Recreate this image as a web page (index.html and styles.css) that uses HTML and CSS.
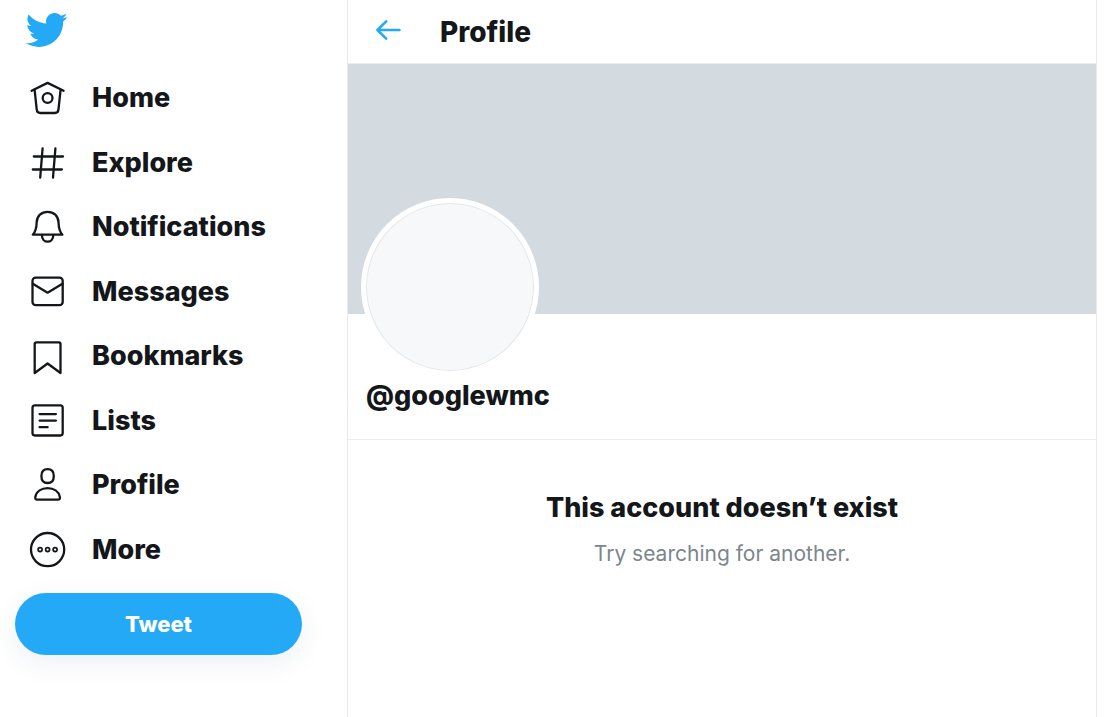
FILE: index.html
```html
<!DOCTYPE html>
<html lang="en">
<head>
<meta charset="utf-8">
<meta name="viewport" content="width=device-width, initial-scale=1">
<title>Profile / Twitter</title>
<link rel="stylesheet" href="styles.css">
</head>
<body>
<div class="layout">
  <header class="sidebar">
    <a class="logo" href="#" aria-label="Twitter">
      <svg viewBox="0 0 24 24" aria-hidden="true"><path d="M23.643 4.937c-.835.37-1.732.62-2.675.733.962-.576 1.7-1.49 2.048-2.578-.9.534-1.897.922-2.958 1.13-.85-.904-2.06-1.47-3.4-1.47-2.572 0-4.658 2.086-4.658 4.66 0 .364.042.718.12 1.06-3.873-.195-7.304-2.05-9.602-4.868-.4.69-.63 1.49-.63 2.342 0 1.616.823 3.043 2.072 3.878-.764-.025-1.482-.234-2.11-.583v.06c0 2.257 1.605 4.14 3.737 4.568-.392.106-.803.162-1.227.162-.3 0-.593-.028-.877-.082.593 1.85 2.313 3.198 4.352 3.234-1.595 1.25-3.604 1.995-5.786 1.995-.376 0-.747-.022-1.112-.065 2.062 1.323 4.51 2.093 7.14 2.093 8.57 0 13.255-7.098 13.255-13.254 0-.2-.005-.402-.014-.602.91-.658 1.7-1.477 2.323-2.41z"/></svg>
    </a>
    <nav class="menu" aria-label="Primary">
      <a class="menu-item" href="#">
        <svg class="icon" viewBox="0 0 40 40" aria-hidden="true"><path d="M3.6 12.7 19.6 4.9l16 7.8M6.6 11.6l2.1 19.8q.3 3.6 3.6 3.6h14.6q3.3 0 3.6-3.6l2.1-19.8"/><circle cx="19.6" cy="20" r="4.9"/></svg>
        <span>Home</span>
      </a>
      <a class="menu-item" href="#">
        <svg class="icon" viewBox="0 0 40 40" aria-hidden="true"><path d="M14.6 5.4 12.2 34.6M27.4 5.4 25 34.6M5.8 13.5H35M4.8 26.5h29.1"/></svg>
        <span>Explore</span>
      </a>
      <a class="menu-item" href="#">
        <svg class="icon" viewBox="0 0 40 40" aria-hidden="true"><path d="M4.8 27.7C7.9 24.5 8.5 21.5 8.7 15.2 8.9 9 13.4 4.8 19.6 4.8S30.3 9 30.5 15.2c.2 6.3.8 9.3 3.9 12.5zM13.9 27.9c0 4.3 2.6 6.8 5.7 6.8s5.7-2.5 5.7-6.8"/></svg>
        <span>Notifications</span>
      </a>
      <a class="menu-item" href="#">
        <svg class="icon" viewBox="0 0 40 40" aria-hidden="true"><rect x="4.5" y="5.6" width="30.2" height="27.6" rx="3.2"/><path d="m4.8 11.8 14.8 8.9 14.8-8.9"/></svg>
        <span>Messages</span>
      </a>
      <a class="menu-item" href="#">
        <svg class="icon" viewBox="0 0 40 40" aria-hidden="true"><path d="M6.7 37V8q0-1.6 1.6-1.6h22.6q1.6 0 1.6 1.6v29l-12.9-9.5z"/></svg>
        <span>Bookmarks</span>
      </a>
      <a class="menu-item" href="#">
        <svg class="icon" viewBox="0 0 40 40" aria-hidden="true"><rect x="4.5" y="4.3" width="30.2" height="30.2" rx="2.4"/><path d="M11.6 13.1h16.3M11.6 19.6h16.3M11.6 26.2h8"/></svg>
        <span>Lists</span>
      </a>
      <a class="menu-item" href="#">
        <svg class="icon" viewBox="0 0 40 40" aria-hidden="true"><path d="M19.6 4.2c4.2 0 6.2 2.8 6.2 6.8s-1.6 7-6.2 7-6.2-3-6.2-7 2-6.8 6.2-6.8zM9.3 34.6q-2.4 0-2-2.6c1.2-5.5 6.2-8.8 12.3-8.8s11.1 3.3 12.3 8.8q.4 2.6-2 2.6z"/></svg>
        <span>Profile</span>
      </a>
      <a class="menu-item" href="#">
        <svg class="icon" viewBox="0 0 40 40" aria-hidden="true"><circle cx="19.6" cy="19.6" r="16.6"/><g class="dots"><circle cx="12.1" cy="19.6" r="2"/><circle cx="19.6" cy="19.6" r="2"/><circle cx="27.1" cy="19.6" r="2"/></g></svg>
        <span>More</span>
      </a>
    </nav>
    <button class="tweet" type="button">Tweet</button>
  </header>
  <main class="column">
    <div class="topbar">
      <button class="back" type="button" aria-label="Back">
        <svg viewBox="0 0 26 24" aria-hidden="true"><path d="M24.5 10H2.4M11.2 1.4 2.4 10l8.8 8.6"/></svg>
      </button>
      <h1 class="title">Profile</h1>
    </div>
    <div class="banner"></div>
    <section class="profile">
      <div class="avatar"></div>
      <h2 class="heading">@googlewmc</h2>
    </section>
    <section class="empty">
      <h2 class="heading">This account doesn’t exist</h2>
      <p class="hint">Try searching for another.</p>
    </section>
  </main>
</div>
</body>
</html>
```
FILE: styles.css
```css
* {
  box-sizing: border-box;
}

body {
  margin: 0;
  background: #fff;
  color: #14171a;
  font-family: Inter, "Liberation Sans", sans-serif;
}

a {
  color: inherit;
  text-decoration: none;
}

button {
  border: 0;
  font: inherit;
  cursor: pointer;
}

.layout {
  display: grid;
  grid-template-columns: 347px 1fr;
  min-height: 100vh;
  padding-right: 15px;
}

.sidebar {
  display: flex;
  flex-direction: column;
  padding: 8px 45px 0 15px;
}

.logo {
  align-self: flex-start;
  margin: 0 9px;
}

.logo svg {
  display: block;
  width: 44px;
  height: 44px;
  fill: #23a9f6;
}

.menu {
  display: grid;
  grid-auto-rows: 1fr;
  min-height: 516px;
  margin-top: 14px;
}

.menu-item {
  display: flex;
  align-items: center;
  gap: 24px;
  padding-left: 13px;
  font-size: 27px;
  font-weight: 800;
  line-height: 36px;
}

.icon {
  width: 40px;
  height: 40px;
  fill: none;
  stroke: #14171a;
  stroke-width: 2.3;
  stroke-linecap: round;
  stroke-linejoin: round;
}

.dots {
  stroke-width: 1.7;
}

.tweet {
  height: 62px;
  margin-top: 11px;
  border-radius: 31px;
  background: #23a9f6;
  box-shadow: 0 8px 28px rgba(20, 60, 100, 0.08);
  color: #fff;
  font-size: 22px;
  font-weight: 800;
}

.column {
  border: solid #e8ebed;
  border-width: 0 1px;
}

.topbar {
  display: flex;
  align-items: center;
  gap: 39px;
  height: 64px;
  padding: 0 27px;
  border-bottom: 1px solid #e8ebed;
}

.back {
  padding: 0;
  background: none;
}

.back svg {
  display: block;
  width: 26px;
  height: 24px;
  fill: none;
  stroke: #23a9f6;
  stroke-width: 2.5;
  stroke-linecap: round;
  stroke-linejoin: round;
}

.title,
.heading {
  margin: 0;
  font-size: 27px;
  font-weight: 800;
  line-height: 36px;
}

.title {
  font-size: 28px;
}

.banner {
  height: 250px;
  background: #d3dae0;
}

.profile {
  padding: 0 18px 25px;
  border-bottom: 1px solid #e8ebed;
}

.avatar {
  width: 178px;
  height: 178px;
  margin: -116px 0 2px -5px;
  border: 5px solid #fff;
  border-radius: 50%;
  background: #f6f8fa;
  box-shadow: inset 0 0 0 1px #e3e7ea;
}

.empty {
  padding: 50px 20px;
  text-align: center;
}

.hint {
  margin: 14px 0 0;
  color: #7b868d;
  font-size: 21px;
  line-height: 28px;
}
```
